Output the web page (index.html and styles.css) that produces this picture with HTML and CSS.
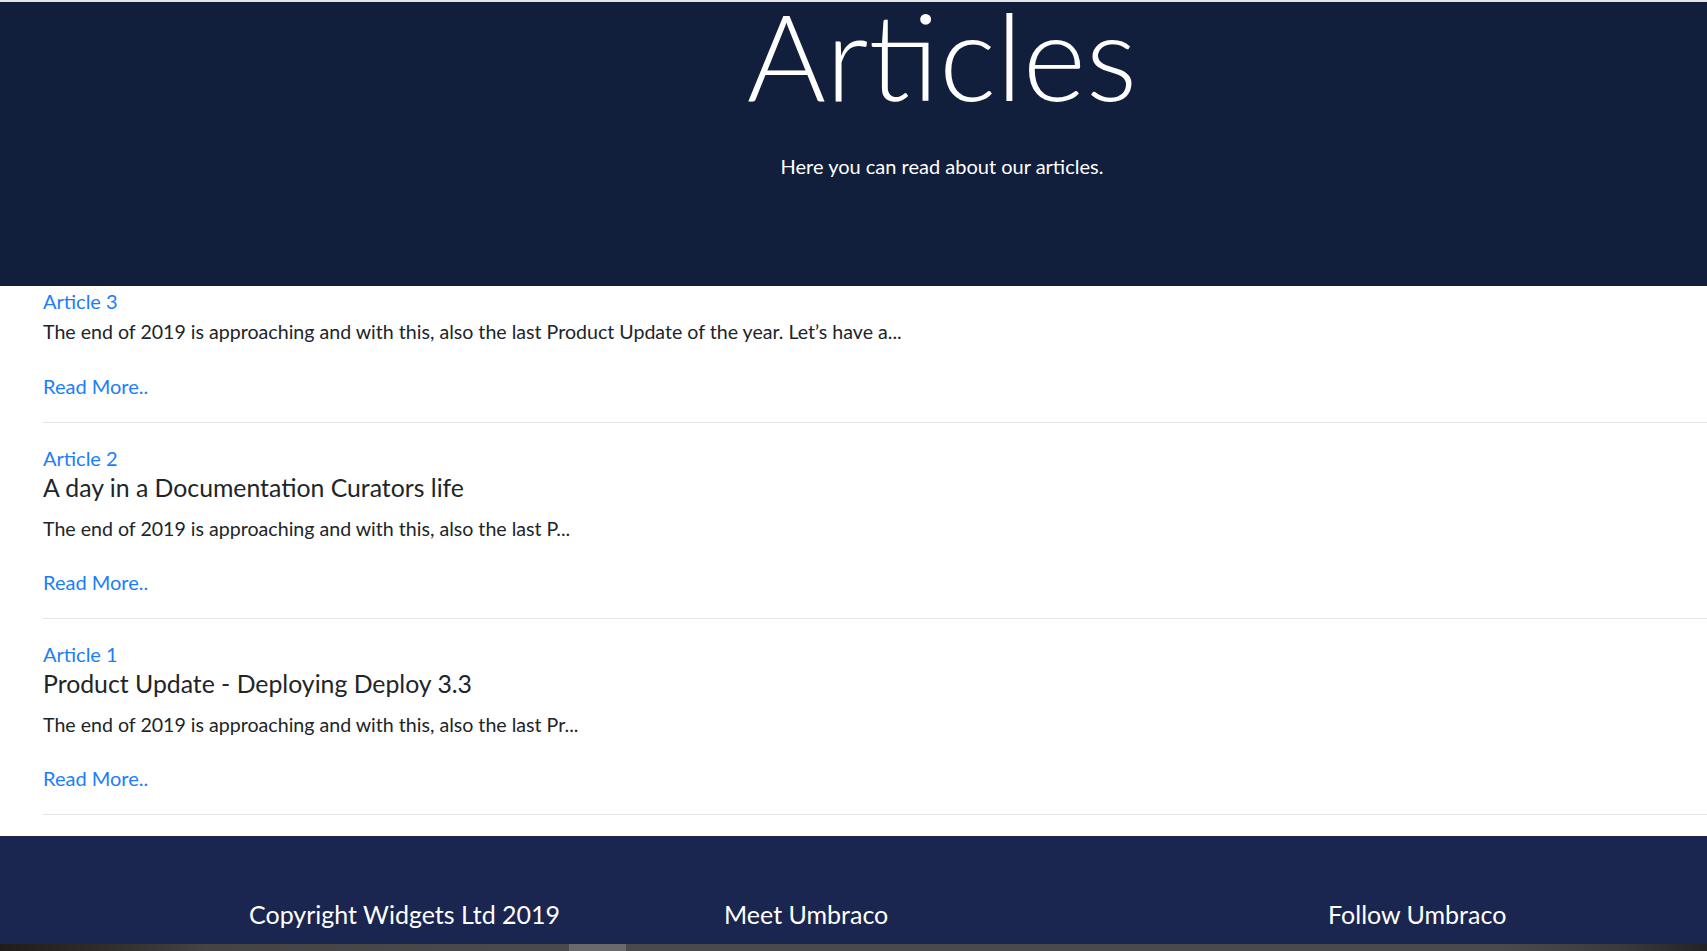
FILE: index.html
```html
<!DOCTYPE html>
<html lang="en">
<head>
<meta charset="utf-8">
<title>Articles</title>
<link rel="stylesheet" href="styles.css">
</head>
<body>
<div class="page">
  <header class="hero">
    <h1 class="hero-title">Articles</h1>
    <p class="hero-subtitle">Here you can read about our articles.</p>
  </header>

  <main class="article-list">
    <article class="article article--untitled">
      <a class="article-label" href="#">Article 3</a>
      <p class="article-excerpt">The end of 2019 is approaching and with this, also the last Product Update of the year. Let’s have a...</p>
      <a class="article-more" href="#">Read More..</a>
    </article>
    <article class="article">
      <a class="article-label" href="#">Article 2</a>
      <h2 class="article-title">A day in a Documentation Curators life</h2>
      <p class="article-excerpt">The end of 2019 is approaching and with this, also the last P...</p>
      <a class="article-more" href="#">Read More..</a>
    </article>
    <article class="article">
      <a class="article-label" href="#">Article 1</a>
      <h2 class="article-title">Product Update - Deploying Deploy 3.3</h2>
      <p class="article-excerpt">The end of 2019 is approaching and with this, also the last Pr...</p>
      <a class="article-more" href="#">Read More..</a>
    </article>
  </main>

  <footer class="footer">
    <div class="footer-col footer-col--copy">Copyright Widgets Ltd 2019</div>
    <div class="footer-col">Meet Umbraco</div>
    <div class="footer-col">Follow Umbraco</div>
  </footer>

  <div class="taskbar"><span class="taskbar-thumb"></span></div>
</div>
</body>
</html>
```

FILE: styles.css
```css
* { box-sizing: border-box; }

html, body {
  margin: 0;
  padding: 0;
  background: #ffffff;
}

body {
  font-family: "Lato", "Noto Sans", sans-serif;
  color: #212529;
  overflow: hidden;
}

.page {
  border-top: 2px solid #e4e5e7;
  display: flex;
  flex-direction: column;
  height: 951px;
}

/* Header */
.hero {
  background: #111f3d;
  color: #ffffff;
  height: 284px;
  flex: none;
  padding: 0 0 0 177px;
  text-align: center;
}

.hero-title {
  margin: 0;
  font-size: 121px;
  font-weight: 300;
  line-height: 106px;
}

.hero-subtitle {
  margin: 45px 0 0;
  font-size: 20px;
  line-height: 27px;
  font-weight: 400;
}

/* Articles */
.article-list {
  flex: none;
  padding: 0 0 21px 43px;
}

.article {
  display: flex;
  flex-direction: column;
  align-items: flex-start;
  padding: 25px 0 24px;
  border-bottom: 1px solid #e6e6e6;
}

.article:first-child {
  padding-top: 5px;
}

.article-label {
  color: #1a7efb;
  text-decoration: none;
  font-size: 20px;
  line-height: 20px;
}

.article-title {
  margin: 6px 0 0;
  font-size: 24.8px;
  font-weight: 400;
  line-height: 28px;
  color: #212529;
}

.article-excerpt {
  margin: 15px 0 0;
  font-size: 19.6px;
  line-height: 24px;
  color: #212529;
}

.article--untitled .article-excerpt {
  margin-top: 9px;
}

.article-more {
  margin-top: 29px;
  color: #1a7efb;
  text-decoration: none;
  font-size: 20px;
  line-height: 24px;
}

.article--untitled .article-more {
  margin-top: 30px;
}

/* Footer */
.footer {
  flex: none;
  background: #1b2650;
  color: #ffffff;
  display: grid;
  grid-template-columns: 724px 604px 1fr;
  padding: 60px 0 12px;
  font-size: 25px;
  line-height: 36px;
}

.footer-col--copy {
  padding-left: 249px;
}

/* Bottom strip */
.taskbar {
  flex: 1;
  display: flex;
  background: linear-gradient(to right, #1f1c19 0%, #2f2c29 6%, #454443 12%, #4a4a4a 30%, #4a4a4a 88%, #3a3a3a 95%, #232323 100%);
}

.taskbar-thumb {
  width: 57px;
  margin-left: 569px;
  background: #6a6a6a;
}
```
